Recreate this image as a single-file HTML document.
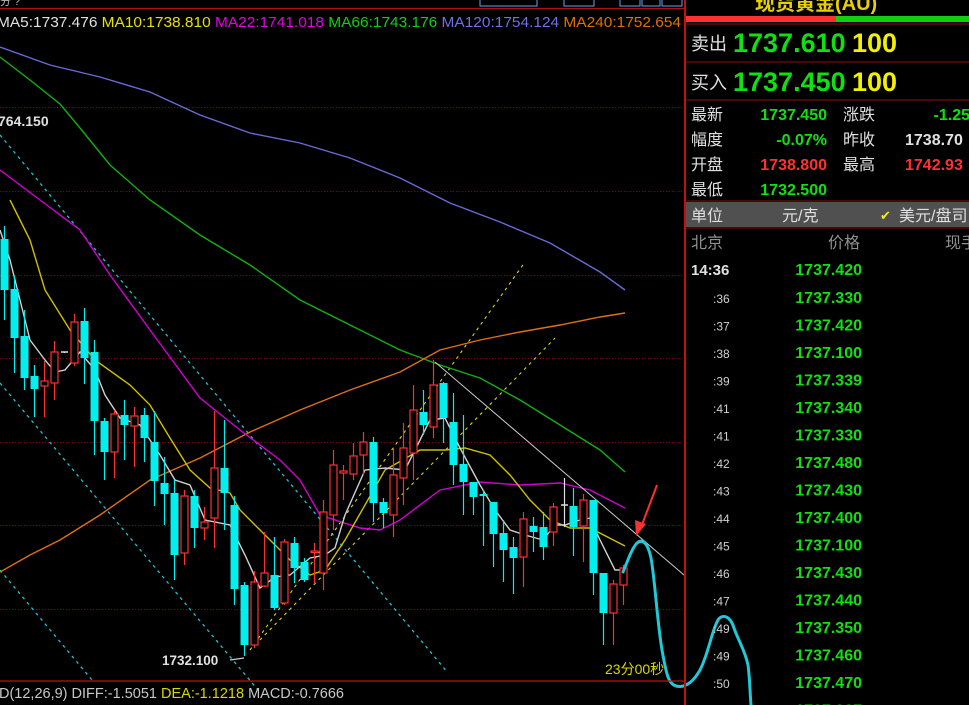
<!DOCTYPE html>
<html><head><meta charset="utf-8">
<style>
html,body{margin:0;padding:0;background:#000;width:969px;height:705px;overflow:hidden}
svg{display:block}
text{font-family:"Liberation Sans","Noto Sans CJK SC",sans-serif}
</style></head><body>
<svg id="s" width="969" height="705" viewBox="0 0 969 705" xmlns="http://www.w3.org/2000/svg">
<rect width="969" height="705" fill="#000"/>
<!-- top title fragment -->
<text x="0" y="5" fill="#bbb" font-size="11">分 ?</text>
<g fill="none" stroke="#6aa0e0" stroke-width="1">
<rect x="480" y="-3" width="57" height="9"/><rect x="564" y="-3" width="30" height="9"/><rect x="620" y="-3" width="20" height="9"/><rect x="642" y="-3" width="18" height="9"/><rect x="662" y="-3" width="20" height="9"/>
</g>
<line x1="0" y1="8.5" x2="684" y2="8.5" stroke="#b01010" stroke-width="1.2"/>
<!-- MA labels -->
<text y="27" font-size="14.5" textLength="684" lengthAdjust="spacingAndGlyphs" x="-3"><tspan fill="#e0e0e0">MA5:1737.476 </tspan><tspan fill="#e8e000">MA10:1738.810 </tspan><tspan fill="#e000e0">MA22:1741.018 </tspan><tspan fill="#10d010">MA66:1743.176 </tspan><tspan fill="#7070e8">MA120:1754.124 </tspan><tspan fill="#e07000">MA240:1752.654</tspan></text>
<!-- grid -->
<g stroke="#8a0000" stroke-width="1" stroke-dasharray="1,2">
<line x1="0" y1="107.5" x2="684" y2="107.5"/><line x1="0" y1="191.5" x2="684" y2="191.5"/><line x1="0" y1="275.5" x2="684" y2="275.5"/><line x1="0" y1="358.5" x2="684" y2="358.5"/><line x1="0" y1="442.5" x2="684" y2="442.5"/><line x1="0" y1="525.5" x2="684" y2="525.5"/><line x1="0" y1="609.5" x2="684" y2="609.5"/>
</g>
<text x="-2" y="126" fill="#e0e0e0" font-size="14" font-weight="bold">764.150</text>
<!-- dashed channels -->
<g stroke="#20c0d0" stroke-width="1.3" stroke-dasharray="3,4" fill="none">
<line x1="0" y1="135" x2="448" y2="673"/><line x1="0" y1="383" x2="258" y2="690"/><line x1="0" y1="570" x2="92" y2="680"/>
</g>
<g stroke="#d8d820" stroke-width="1.1" stroke-dasharray="3,4" fill="none">
<line x1="250" y1="650" x2="525" y2="262"/><line x1="255" y1="645" x2="555" y2="338"/>
</g>
<!-- MAs -->
<g fill="none" stroke-width="1.4">
<polyline stroke="#6a6ad8" points="0,47 50,65 100,77 150,92 200,115 250,133 300,143 350,158 400,178 450,203 500,222 550,243 600,272 625,290"/>
<polyline stroke="#10b010" points="0,57 30,80 60,104 80,128 110,165 150,200 200,235 250,265 300,300 350,325 400,350 440,365 480,378 520,400 560,425 600,450 625,472"/>
<polyline stroke="#e07010" points="0,572 30,555 60,540 100,515 150,480 200,458 250,432 300,410 350,390 400,372 440,350 480,340 520,332 560,325 600,317 625,313"/>
<polyline stroke="#d000d0" points="0,170 40,200 80,230 110,275 150,330 200,398 240,430 280,460 300,480 320,515 360,528 380,530 400,520 440,490 480,482 520,485 560,483 590,490 625,508"/>
<polyline stroke="#d0c000" points="10,200 30,240 45,290 70,330 95,360 130,385 150,405 170,438 190,470 210,488 230,493 240,510 260,530 290,560 310,575 325,570 345,540 365,505 385,470 420,450 445,450 465,448 490,455 510,475 530,500 550,520 570,528 590,528 625,546"/>
<polyline stroke="#d0d0d0" points="0,230 10,260 20,300 30,340 45,360 55,372 65,370 80,352 95,370 105,395 120,418 140,425 160,455 175,480 190,485 205,520 230,525 245,555 260,588 275,577 290,575 310,558 325,555 335,548 345,515 365,470 385,468 405,470 430,420 445,418 460,448 480,485 495,510 510,530 525,535 543,540 555,525 565,525 580,520 590,518 600,540 615,570 625,570"/>
<line x1="435" y1="362" x2="684" y2="575" stroke="#c8c8c8" stroke-width="1"/>
</g>
<g id="candles"></g>
<!-- labels -->
<text x="162" y="665" fill="#e0e0e0" font-size="13.5" font-weight="bold">1732.100</text>
<line x1="230" y1="660" x2="244" y2="658" stroke="#ccc" stroke-width="1.3"/>
<text x="605" y="674" fill="#d8d800" font-size="14">23分00秒</text>
<!-- red arrow -->
<line x1="657" y1="485" x2="640" y2="530" stroke="#ff3030" stroke-width="2"/>
<polygon points="636,536 635,520 646,524" fill="#ff3030"/>
<!-- hand drawn curve -->
<path d="M623,572 C628,560 632,548 637,543 C643,538 648,544 651,558 C655,580 657,620 662,650 C666,672 668,684 676,686 C684,688 692,684 700,670 C708,655 712,630 718,620 C722,614 730,615 734,628 C738,640 745,650 748,665 C750,680 750,695 751,705" fill="none" stroke="#20c8d8" stroke-width="3" stroke-linecap="round"/>
<!-- bottom -->
<line x1="0" y1="681" x2="684" y2="681" stroke="#c01010" stroke-width="1.2"/>
<text x="-1" y="698" font-size="14.5"><tspan fill="#c8c8c8">D(12,26,9) DIFF:-1.5051 </tspan><tspan fill="#d8d800">DEA:-1.1218 </tspan><tspan fill="#c8c8c8">MACD:-0.7666</tspan></text>
<!-- right panel -->
<line x1="685" y1="0" x2="685" y2="705" stroke="#c01010" stroke-width="2"/>
<text x="755" y="10" fill="#e8d000" font-size="20" font-weight="bold">现货黄金(AU)</text>
<rect x="686" y="16" width="150" height="6" fill="#ff3030"/>
<rect x="836" y="16" width="133" height="6" fill="#10d010"/>
<line x1="686" y1="24" x2="969" y2="24" stroke="#901010"/>
<text x="691" y="50" fill="#e0e0e0" font-size="18">卖出</text>
<text x="733" y="52" fill="#10e010" font-size="27" font-weight="bold">1737.610</text>
<text x="852" y="52" fill="#f0f000" font-size="27" font-weight="bold">100</text>
<line x1="686" y1="62" x2="969" y2="62" stroke="#901010"/>
<text x="691" y="89" fill="#e0e0e0" font-size="18">买入</text>
<text x="733" y="91" fill="#10e010" font-size="27" font-weight="bold">1737.450</text>
<text x="852" y="91" fill="#f0f000" font-size="27" font-weight="bold">100</text>
<line x1="686" y1="100" x2="969" y2="100" stroke="#901010"/>
<g font-size="16">
<text x="691" y="120" fill="#e0e0e0">最新</text><text x="827" y="120" fill="#10e010" text-anchor="end" font-weight="bold">1737.450</text>
<text x="843" y="120" fill="#e0e0e0">涨跌</text><text x="970" y="120" fill="#10e010" text-anchor="end" font-weight="bold">-1.25</text>
<text x="691" y="145" fill="#e0e0e0">幅度</text><text x="827" y="145" fill="#10e010" text-anchor="end" font-weight="bold">-0.07%</text>
<text x="843" y="145" fill="#e0e0e0">昨收</text><text x="905" y="145" fill="#e0e0e0" font-weight="bold">1738.70</text>
<text x="691" y="170" fill="#e0e0e0">开盘</text><text x="827" y="170" fill="#ff3030" text-anchor="end" font-weight="bold">1738.800</text>
<text x="843" y="170" fill="#e0e0e0">最高</text><text x="905" y="170" fill="#ff3030" font-weight="bold">1742.93</text>
<text x="691" y="195" fill="#e0e0e0">最低</text><text x="827" y="195" fill="#10e010" text-anchor="end" font-weight="bold">1732.500</text>
</g>
<line x1="686" y1="201" x2="969" y2="201" stroke="#901010"/>
<rect x="686" y="202" width="283" height="25" fill="#505050"/>
<line x1="686" y1="228" x2="969" y2="228" stroke="#901010"/>
<g font-size="16">
<text x="691" y="221" fill="#e0e0e0">单位</text>
<text x="782" y="221" fill="#e0e0e0">元/克</text>
<text x="880" y="220" fill="#f0f000" font-size="13">✔</text>
<text x="899" y="221" fill="#e0e0e0">美元/盘司</text>
<text x="691" y="248" fill="#909090">北京</text>
<text x="828" y="248" fill="#909090">价格</text>
<text x="945" y="248" fill="#909090">现手</text>
</g>
<text x="691" y="275" fill="#e0e0e0" font-size="15" font-weight="bold">14:36</text>
<g id="trades" font-size="15"></g>
</svg>
<script>
var ns="http://www.w3.org/2000/svg",s=document.getElementById('candles');
var C=[[4,239,290,226,320,'c'],[14,289,338,276,373,'c'],[24,336,378,310,390,'c'],[34,376,389,365,417,'c'],[44,381,386,361,417,'r'],[54,352,383,341,400,'r'],[64,352,353,352,353,'w'],[74,322,363,314,366,'r'],[84,321,358,308,384,'c'],[94,352,421,340,455,'c'],[104,421,452,418,480,'c'],[114,414,452,410,478,'r'],[124,415,425,400,460,'c'],[134,416,426,407,467,'r'],[144,415,438,408,462,'c'],[154,442,481,411,506,'c'],[164,483,494,457,525,'c'],[174,493,555,480,580,'c'],[184,496,553,490,565,'r'],[194,496,528,490,548,'c'],[204,522,528,507,540,'r'],[214,468,518,411,548,'r'],[224,468,493,420,530,'c'],[234,505,589,496,605,'c'],[244,585,645,582,656,'c'],[254,582,645,571,648,'r'],[264,573,586,532,587,'r'],[274,575,608,537,610,'c'],[284,542,603,539,605,'r'],[294,543,568,537,583,'c'],[304,562,580,558,582,'c'],[314,551,552,543,584,'r'],[323,512,573,500,590,'r'],[333,465,515,450,530,'r'],[343,471,473,465,500,'r'],[353,456,474,443,480,'r'],[363,442,455,432,475,'r'],[373,442,503,437,522,'c'],[383,502,513,498,528,'c'],[393,475,515,448,537,'r'],[403,448,478,423,505,'r'],[413,410,453,385,480,'r'],[423,412,425,390,435,'c'],[433,385,427,360,438,'r'],[443,383,418,382,443,'c'],[453,422,465,393,485,'c'],[463,464,482,415,515,'c'],[473,482,497,483,515,'c'],[483,494,496,490,546,'c'],[493,502,534,502,567,'c'],[503,533,550,520,582,'c'],[513,547,558,537,594,'c'],[523,519,557,512,587,'r'],[533,526,532,517,552,'c'],[543,527,547,512,560,'c'],[553,507,532,503,546,'r'],[564,505,507,478,527,'w'],[573,506,527,488,556,'c'],[583,500,526,494,562,'r'],[593,500,573,500,595,'c'],[603,573,613,573,645,'c'],[613,584,613,580,645,'r'],[623,568,585,565,605,'r']];
function el(t,a){var e=document.createElementNS(ns,t);for(var k in a)e.setAttribute(k,a[k]);s.appendChild(e);return e;}
C.forEach(function(d){var x=d[0],col=d[5]=='c'?'#00f0f0':d[5]=='r'?'#ff3030':'#e0e0e0';
el('line',{x1:x+.5,y1:d[3],x2:x+.5,y2:d[4],stroke:col,'stroke-width':1.2});
var h=Math.max(d[2]-d[1],1.5);
if(d[5]=='c')el('rect',{x:x-3.5,y:d[1],width:8,height:h,fill:col});
else if(d[5]=='r'){el('rect',{x:x-3,y:d[1],width:7,height:h,fill:'#000',stroke:col,'stroke-width':1.2});}
else el('line',{x1:x-3,y1:d[1],x2:x+4,y2:d[1],stroke:col,'stroke-width':1.5});});
var T=[":36","1737.330",":37","1737.420",":38","1737.100",":39","1737.339",":41","1737.340",":41","1737.330",":42","1737.480",":43","1737.430",":44","1737.400",":45","1737.100",":46","1737.430",":47","1737.440",":49","1737.350",":49","1737.460",":50","1737.470",":51","1737.387"];
var g=document.getElementById('trades');
g.innerHTML='<text x="862" y="275" fill="#10e010" text-anchor="end" font-weight="bold" font-size="16">1737.420</text>';
for(var i=0;i<T.length/2;i++){var y=303+i*27.5;
g.innerHTML+='<text x="713" y="'+y+'" fill="#d0d0d0" font-size="12">'+T[2*i]+'</text><text x="862" y="'+y+'" fill="#10e010" text-anchor="end" font-weight="bold" font-size="16">'+T[2*i+1]+'</text>';}
</script>
</body></html>
